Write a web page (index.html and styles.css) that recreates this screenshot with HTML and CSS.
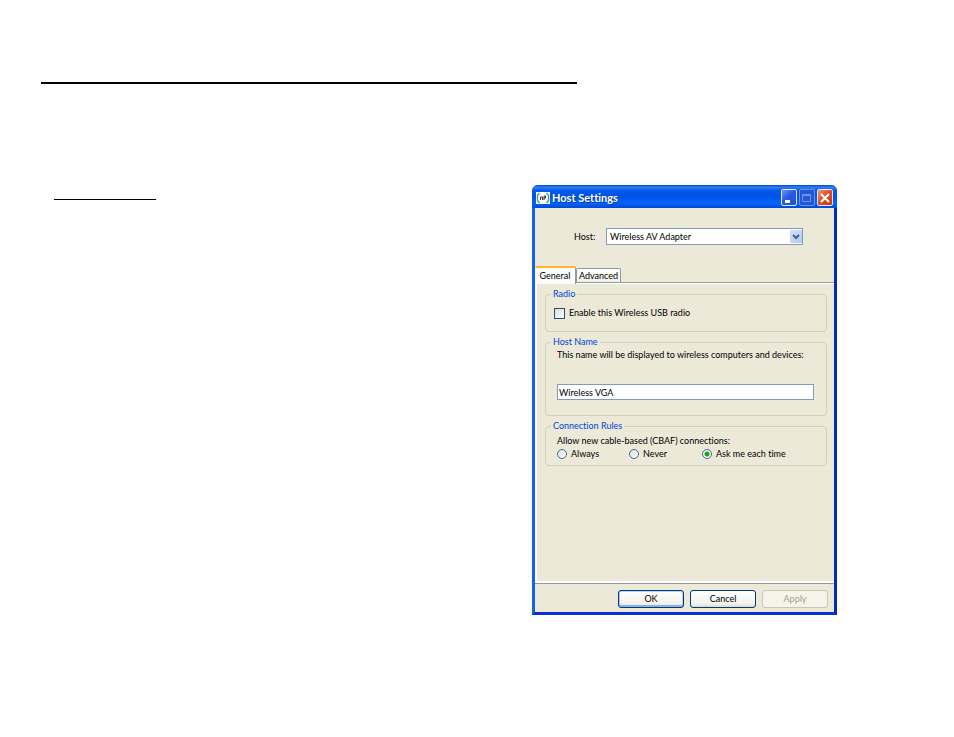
FILE: index.html
```html
<!DOCTYPE html>
<html lang="en">
<head>
<meta charset="utf-8">
<title>Host Settings</title>
<link rel="stylesheet" href="styles.css">
</head>
<body>
<main class="page">
  <hr class="rule">
  <div class="columns">
    <div class="notes"><hr class="underline"></div>
    <section class="window" aria-labelledby="title">
      <header class="titlebar">
        <svg class="app-icon" width="14" height="12" viewBox="0 0 14 12" aria-hidden="true">
          <rect width="14" height="12" fill="#fff"/>
          <path d="M3.500 1 1.500 3.500v5L3.500 11M10.500 1l2 2.500v5L10.500 11" fill="none" stroke="#4a9a92" stroke-width="1.400"/>
          <path d="M4.500 8V5h2v3M8 8V4h1.500v2H8" fill="none" stroke="#222" stroke-width=".9"/>
        </svg>
        <h1 class="title" id="title">Host Settings</h1>
        <button class="control" type="button" aria-label="Minimize">
          <svg width="14" height="14" viewBox="0 0 14 14"><path d="M3 10.5h5" stroke="#fff" stroke-width="3"/></svg>
        </button>
        <button class="control control-off" type="button" aria-label="Maximize" disabled>
          <svg width="14" height="14" viewBox="0 0 14 14"><path d="M2.500 3.500h8v7h-8zM2 4.500h9" fill="none" stroke="#6f93ee"/></svg>
        </button>
        <button class="control control-close" type="button" aria-label="Close">
          <svg width="14" height="14" viewBox="0 0 14 14"><path d="m3 3 8 8M11 3l-8 8" stroke="#fff" stroke-width="2"/></svg>
        </button>
      </header>
      <form class="body">
        <div class="host">
          <label for="host">Host:</label>
          <div class="select">
            <select id="host"><option>Wireless AV Adapter</option></select>
            <span class="arrow"><svg width="8" height="6" viewBox="0 0 8 6"><path d="m1 1 3 3 3-3" fill="none" stroke="#4d6185" stroke-width="2"/></svg></span>
          </div>
        </div>
        <div class="tabs" role="tablist">
          <button class="tab tab-active" type="button" role="tab" aria-selected="true">General</button>
          <button class="tab" type="button" role="tab" aria-selected="false">Advanced</button>
        </div>
        <div class="panel" role="tabpanel">
          <fieldset class="group">
            <legend>Radio</legend>
            <label class="choice choice-check"><input type="checkbox">Enable this Wireless USB radio</label>
          </fieldset>
          <fieldset class="group group-name">
            <legend>Host Name</legend>
            <label class="caption" for="name">This name will be displayed to wireless computers and devices:</label>
            <input class="text" id="name" type="text" value="Wireless VGA">
          </fieldset>
          <fieldset class="group group-rules">
            <legend>Connection Rules</legend>
            <div class="caption">Allow new cable-based (CBAF) connections:</div>
            <div class="choices">
              <label class="choice"><input type="radio" name="rule">Always</label>
              <label class="choice"><input type="radio" name="rule">Never</label>
              <label class="choice"><input type="radio" name="rule" checked>Ask me each time</label>
            </div>
          </fieldset>
        </div>
        <footer class="actions">
          <button class="button button-default" type="button">OK</button>
          <button class="button" type="button">Cancel</button>
          <button class="button" type="button" disabled>Apply</button>
        </footer>
      </form>
    </section>
  </div>
</main>
</body>
</html>
```
FILE: styles.css
```css
* { box-sizing: border-box; }

body {
  margin: 0;
  background: #fff;
  color: #000;
  font: 9px/12px Lato, "Liberation Sans", sans-serif;
  font-variant-ligatures: none;
}

button, input, select {
  margin: 0;
  padding: 0;
  font: inherit;
  color: inherit;
}

svg { display: block; }

.page { padding: 82px 0 0 41px; }

.rule {
  width: 536px;
  max-width: 100%;
  height: 2px;
  margin: 0 0 101px;
  border: 0;
  background: #000;
}

.columns {
  display: grid;
  grid-template-columns: 491px 305px;
}

.notes { padding: 14px 13px; }

.underline {
  width: 102px;
  height: 1px;
  margin: 0;
  border: 0;
  background: #000;
}

.window {
  display: flex;
  flex-direction: column;
  min-height: 430px;
  border: solid #0831d9;
  border-width: 0 3px 3px;
  border-left-color: #1660ee;
  border-right-color: #0428b8;
  border-radius: 6px 6px 0 0;
  background: #ece9d8;
}

.titlebar {
  display: flex;
  align-items: center;
  gap: 2px;
  height: 23px;
  margin: 0 -3px;
  padding: 2px 4px 0;
  border-radius: 6px 6px 0 0;
  background: linear-gradient(#0848c8, #2b80f5 10%, #0758e8 25%, #0054e3 50%, #0264ff 80%, #0148d0);
  color: #fff;
}

.title {
  flex: 1;
  margin: 0;
  font-size: 11px;
  line-height: 14px;
  text-shadow: 1px 1px #0a3490;
}

.control {
  width: 16px;
  height: 17px;
  border: 1px solid #dce7ff;
  border-radius: 2px;
  background: linear-gradient(135deg, #6d94f0, #2a5ade 45%, #2150d5);
}

.control-off {
  border-color: #6f93ee;
  background: #2256d8;
}

.control-close { background: linear-gradient(135deg, #f09a80, #dc5128 45%, #c8380f); }

.body {
  flex: 1;
  display: flex;
  flex-direction: column;
}

.host {
  display: grid;
  grid-template-columns: 32px 1fr;
  align-items: center;
  padding: 20px 31px 21px 39px;
}

.select { position: relative; }

.select select {
  display: block;
  width: 100%;
  height: 17px;
  padding-left: 3px;
  border: 1px solid #7f9db9;
  border-radius: 0;
  background: #fff;
  appearance: none;
}

.arrow {
  position: absolute;
  top: 2px;
  right: 1px;
  display: grid;
  place-items: center;
  width: 12px;
  height: 13px;
  border-radius: 1px;
  background: linear-gradient(135deg, #d4dffc, #b4c8f6);
  pointer-events: none;
}

.tabs {
  display: flex;
  align-items: flex-end;
  height: 17px;
}

.tab {
  min-width: 45px;
  height: 15px;
  padding: 0 2px;
  border: 1px solid #919b9c;
  border-bottom: 0;
  border-radius: 2px 2px 0 0;
  background: linear-gradient(#fff, #f0efe6);
}

.tab-active {
  z-index: 1;
  min-width: 41px;
  height: 18px;
  margin-bottom: -1px;
  border-top: 2px solid #ffb631;
  border-left: 0;
  background: #fcfcfb;
}

.panel {
  flex: 1;
  display: flex;
  flex-direction: column;
  gap: 4px;
  padding: 4px 7px 0 8px;
  border: solid #fff;
  border-width: 1px 0 2px 2px;
  box-shadow: 0 -1px #919b9c;
}

.group {
  min-width: 0;
  margin: 0;
  padding: 0 8px 4px;
  border: 1px solid #d0d0bf;
  border-radius: 4px;
}

.group legend {
  margin-left: -3px;
  padding: 0 2px;
  color: #0046d5;
}

.group-name { padding-bottom: 15px; }

.caption {
  display: block;
  padding: 1px 0 0 3px;
}

.group-rules .caption { padding-top: 3px; }

.text {
  display: block;
  width: calc(100% - 7px);
  height: 16px;
  margin: 23px 0 0 3px;
  padding: 0 1px;
  border: 1px solid #7f9db9;
  background: #fff;
}

.choices {
  display: grid;
  grid-template-columns: 72px 73px 1fr;
  padding-left: 3px;
}

.choice {
  display: flex;
  align-items: center;
  gap: 4px;
  height: 14px;
}

.choice-check {
  margin: 6px 0 7px;
}

.choice input {
  appearance: none;
  width: 11px;
  height: 11px;
  border: 1px solid #1c5180;
  background: linear-gradient(135deg, #dcdcd7, #fff);
}

.choice input[type="radio"] {
  width: 10px;
  height: 10px;
  border-color: #3d6c98;
  border-radius: 50%;
}

.choice input[type="radio"]:checked {
  background: radial-gradient(circle, #21a121 0 2px, #f7f7f4 3px);
}

.actions {
  display: flex;
  justify-content: flex-end;
  gap: 6px;
  padding: 6px 6px 4px;
  border-top: 1px solid #919b9c;
}

.button {
  width: 66px;
  height: 18px;
  border: 1px solid #003c74;
  border-radius: 3px;
  background: linear-gradient(#fff, #f3f2ec 80%, #dcd8cd);
}

.button-default { box-shadow: inset 0 -2px #8fafea, inset 1px 0 #a9c2f2, inset -1px 1px #b9cff6; }

.button:disabled {
  border-color: #c9c7ba;
  background: #f5f4ea;
  color: #a1a192;
}
```
